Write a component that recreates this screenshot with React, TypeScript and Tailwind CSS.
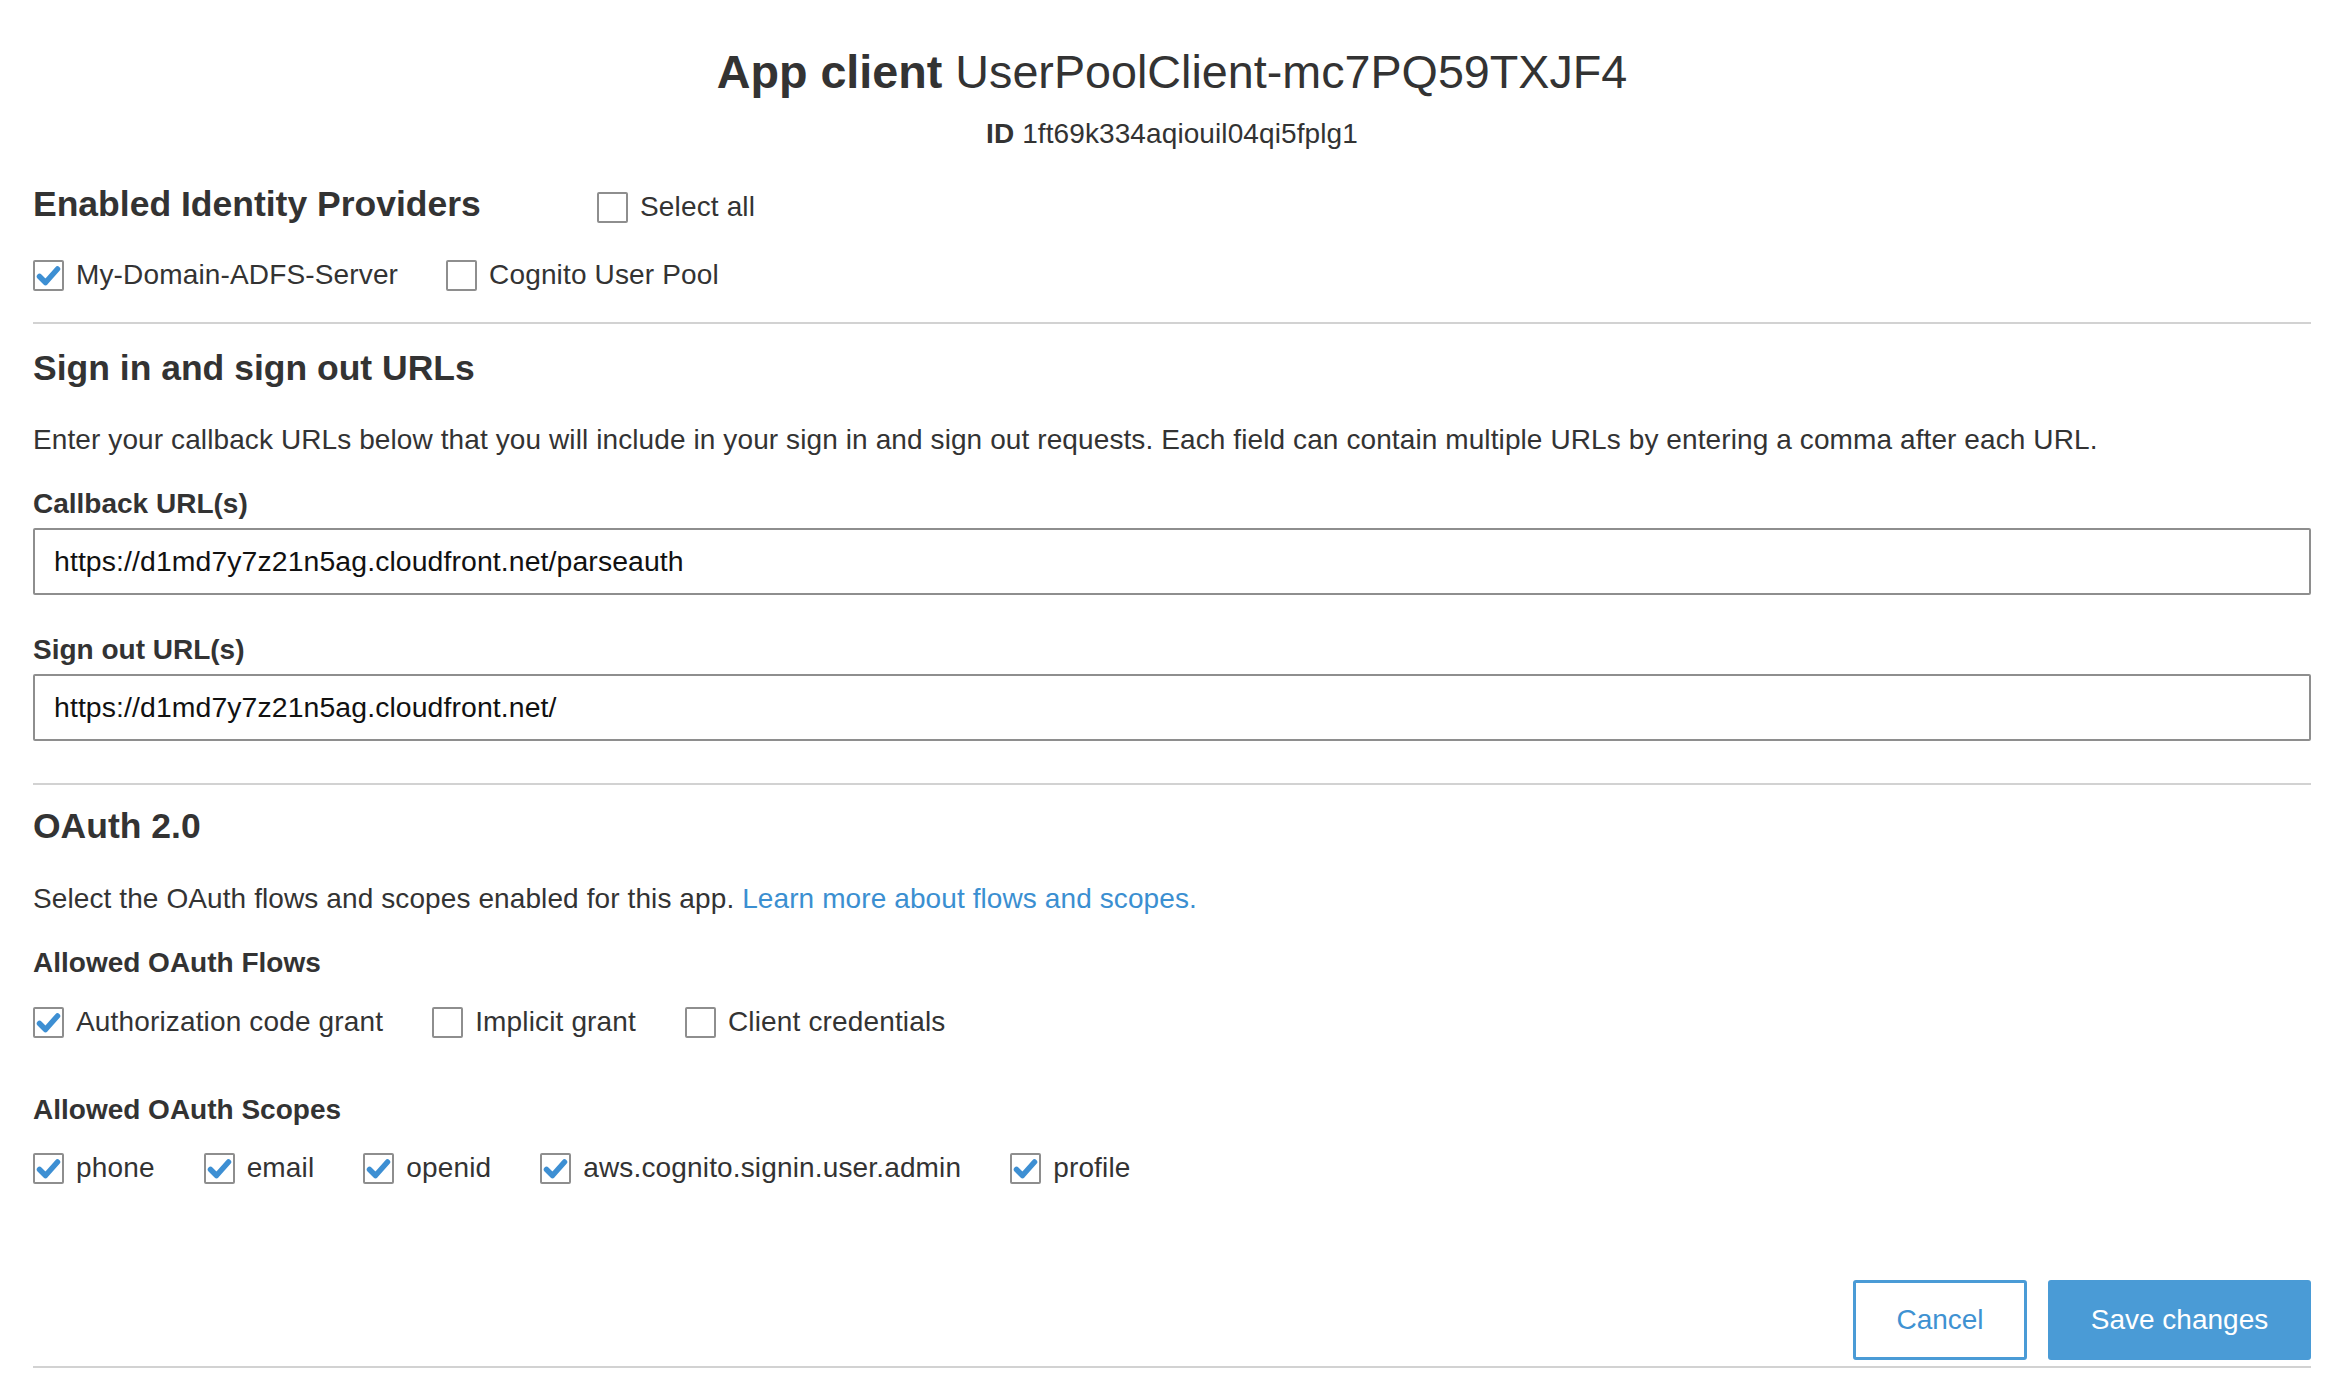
import React from "react";

const font = { fontFamily: '"Liberation Sans", Arial, Helvetica, sans-serif' };

function CheckBox({ checked }: { checked?: boolean }) {
  return (
    <span className="flex h-[31px] w-[31px] shrink-0 items-center justify-center rounded-[2px] border-2 border-[#8e8e8e] bg-white">
      {checked ? (
        <svg width="27" height="27" viewBox="0 0 27 27" fill="none">
          <path
            d="M4.5 14.5 L10.5 20.5 L22.5 7"
            stroke="#3d8fd3"
            strokeWidth="5.5"
            strokeLinecap="round"
            strokeLinejoin="round"
          />
        </svg>
      ) : null}
    </span>
  );
}

function Option({ label, checked }: { label: string; checked?: boolean }) {
  return (
    <label className="flex items-center gap-[12px] text-[28px] tracking-[0.15px] text-[#333]">
      <CheckBox checked={checked} />
      <span>{label}</span>
    </label>
  );
}

function Heading({ children }: { children: React.ReactNode }) {
  return <h2 className="h-[44px] text-[35.5px] font-bold leading-[44px] text-[#333]">{children}</h2>;
}

function Label({ children }: { children: React.ReactNode }) {
  return <div className="h-[36px] text-[28px] font-bold leading-[36px] text-[#333]">{children}</div>;
}

function UrlField({ value }: { value: string }) {
  return (
    <input
      readOnly
      value={value}
      className="mt-[6px] block h-[67px] w-full rounded-[2px] border-2 border-[#8e8e8e] bg-white px-[19px] text-[28.4px] tracking-[0.1px] text-[#111] outline-none"
      style={font}
    />
  );
}

function Divider({ className }: { className: string }) {
  return <div className={"h-[2px] w-full bg-[#d2d2d2] " + className} />;
}

export default function App() {
  const scopes = ["phone", "email", "openid", "aws.cognito.signin.user.admin", "profile"];

  return (
    <div className="min-h-[1378px] w-[2340px] bg-white" style={font}>
      <div className="ml-[33px] w-[2278px] pb-[11px]">
        <h1 className="mt-[44px] h-[56px] text-center text-[46.7px] leading-[56px] text-[#333]">
          <span className="font-bold">App client</span> UserPoolClient-mc7PQ59TXJF4
        </h1>
        <div className="mt-[16px] h-[36px] text-center text-[28px] tracking-[0.1px] leading-[36px] text-[#333]">
          <span className="font-bold">ID</span> 1ft69k334aqiouil04qi5fplg1
        </div>

        <div className="mt-[32px] flex h-[40px] items-center">
          <div className="w-[564px]">
            <Heading>Enabled Identity Providers</Heading>
          </div>
          <div className="pt-[6px]">
            <Option label="Select all" />
          </div>
        </div>
        <div className="mt-[31px] flex h-[40px] items-center gap-[48px]">
          <Option label="My-Domain-ADFS-Server" checked />
          <Option label="Cognito User Pool" />
        </div>

        <Divider className="mt-[27px]" />

        <div className="mt-[22px]">
          <Heading>Sign in and sign out URLs</Heading>
        </div>
        <p className="mt-[32px] h-[36px] text-[28px] tracking-[0.1px] leading-[36px] text-[#333]">
          Enter your callback URLs below that you will include in your sign in and sign out requests. Each
          field can contain multiple URLs by entering a comma after each URL.
        </p>
        <div className="mt-[28px]">
          <Label>Callback URL(s)</Label>
        </div>
        <UrlField value="https://d1md7y7z21n5ag.cloudfront.net/parseauth" />
        <div className="mt-[37px]">
          <Label>Sign out URL(s)</Label>
        </div>
        <UrlField value="https://d1md7y7z21n5ag.cloudfront.net/" />

        <Divider className="mt-[42px]" />

        <div className="mt-[19px]">
          <Heading>OAuth 2.0</Heading>
        </div>
        <p className="mt-[33px] h-[36px] text-[28px] tracking-[0.1px] leading-[36px] text-[#333]">
          Select the OAuth flows and scopes enabled for this app.{" "}
          <a href="#" className="text-[#3b8fd1]">
            Learn more about flows and scopes.
          </a>
        </p>
        <div className="mt-[28px]">
          <Label>Allowed OAuth Flows</Label>
        </div>
        <div className="mt-[21px] flex h-[40px] items-center gap-[49px]">
          <Option label="Authorization code grant" checked />
          <Option label="Implicit grant" />
          <Option label="Client credentials" />
        </div>
        <div className="mt-[50px]">
          <Label>Allowed OAuth Scopes</Label>
        </div>
        <div className="mt-[20px] flex h-[40px] items-center gap-[49px]">
          {scopes.map((s) => (
            <Option key={s} label={s} checked />
          ))}
        </div>

        <div className="mt-[92px] flex justify-end gap-[21px]">
          <button className="h-[80px] w-[174px] rounded-[3px] border-[3px] border-[#4a9bd6] bg-white text-[28px] text-[#3f92d2]">
            Cancel
          </button>
          <button className="h-[80px] w-[263px] rounded-[3px] bg-[#4a9bd6] text-[28px] text-white">
            Save changes
          </button>
        </div>
        <Divider className="mt-[6px]" />
      </div>
    </div>
  );
}
